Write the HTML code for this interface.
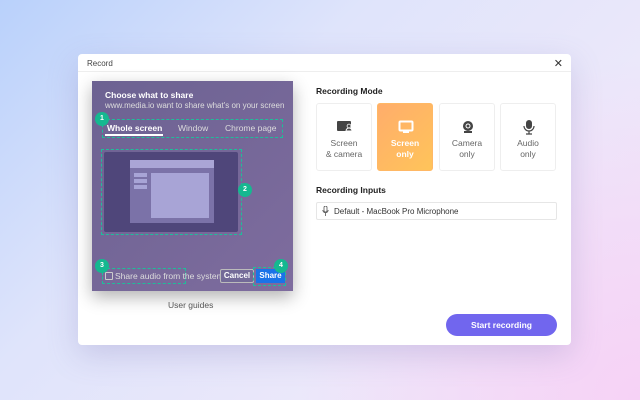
<!DOCTYPE html>
<html><head><style>
*{box-sizing:border-box;margin:0;padding:0}
body{width:640px;height:400px;overflow:hidden;font-family:"Liberation Sans",sans-serif;position:relative;
background:radial-gradient(circle at 100% 100%,#f6d2f6 0,rgba(246,210,246,0) 45%),linear-gradient(135deg,#b9d1fb 0%,#dfe4fb 35%,#ece8fa 70%,#f2e4f8 100%)}
.dlg{position:absolute;left:78px;top:54px;width:493px;height:291px;background:#fff;border-radius:4px;box-shadow:0 10px 30px rgba(120,110,180,.25)}
.hd{height:18px;border-bottom:1px solid #eee;font-size:8px;color:#444;padding:5px 9px}
.x{position:absolute;right:8px;top:3px;font-size:11px;color:#333}
.pp{position:absolute;left:14px;top:27px;width:201px;height:210px;background:linear-gradient(135deg,#6c6292,#7e6c9e);box-shadow:0 6px 16px rgba(0,0,0,.3);color:#fff}
.dash{position:absolute;border:1px dashed #1dbf9a}
.num{position:absolute;width:14px;height:14px;border-radius:50%;background:#15b890;color:#fff;font-size:7px;font-weight:bold;text-align:center;line-height:14px}
.t{position:absolute;font-size:8.5px;white-space:nowrap}
.sec{position:absolute;font-size:8.5px;font-weight:bold;color:#222}
.card{position:absolute;top:49px;width:56px;height:68px;border:1px solid #eee;border-radius:3px;text-align:center;font-size:8.5px;color:#666;line-height:11px;padding-top:34px}
.ic{position:absolute;left:20px;top:16px}
</style></head><body>
<div class="dlg">
<div class="hd">Record</div><div class="x">✕</div>
<div class="pp">
<div class="t" style="left:13px;top:9px;font-weight:bold;font-size:8.5px">Choose what to share</div>
<div class="t" style="left:13px;top:20px;color:#ddd;font-size:8px">www.media.io want to share what's on your screen</div>
<div class="dash" style="left:10px;top:38px;height:19px;width:181px"></div>
<div class="t" style="left:15px;top:42px;font-weight:bold">Whole screen</div>
<div style="position:absolute;left:13px;top:53px;width:58px;height:1.5px;background:#fff"></div>
<div class="t" style="left:86px;top:42px;color:#ddd">Window</div>
<div class="t" style="left:133px;top:42px;color:#ddd">Chrome page</div>
<div class="num" style="left:3px;top:31px">1</div>
<div class="dash" style="left:9px;top:68px;width:141px;height:86px"></div>
<div style="position:absolute;left:12px;top:71px;width:134px;height:80px;background:#4f467a;border-radius:2px"></div>
<div style="position:absolute;left:38px;top:79px;width:84px;height:63px;background:#7b72a8"></div>
<div style="position:absolute;left:38px;top:79px;width:84px;height:8px;background:#aaa5d6"></div>
<div style="position:absolute;left:59px;top:92px;width:58px;height:45px;background:#a8a4d6"></div>
<div style="position:absolute;left:42px;top:92px;width:13px;height:4px;background:#a8a4d6"></div>
<div style="position:absolute;left:42px;top:98px;width:13px;height:4px;background:#a8a4d6"></div>
<div style="position:absolute;left:42px;top:104px;width:13px;height:4px;background:#a8a4d6"></div>
<div class="num" style="left:146px;top:102px">2</div>
<div class="dash" style="left:10px;top:187px;width:84px;height:16px"></div>
<div style="position:absolute;left:13px;top:191px;width:8px;height:8px;border:1px solid #ccc;border-radius:1px"></div>
<div class="t" style="left:23px;top:190px;color:#ddd">Share audio from the system</div>
<div class="num" style="left:3px;top:178px">3</div>
<div style="position:absolute;left:128px;top:188px;width:34px;height:14px;border:1px solid #bbb;border-radius:2px;font-size:8px;font-weight:bold;text-align:center;line-height:12px;background:#736a98">Cancel</div>
<div class="dash" style="left:161px;top:186px;width:33px;height:19px"></div>
<div style="position:absolute;left:164px;top:188px;width:29px;height:14px;background:#1a73e8;font-size:8px;font-weight:bold;text-align:center;line-height:14px">Share</div>
<div class="num" style="left:182px;top:178px">4</div>
</div>
<div class="t" style="left:90px;top:246px;color:#555;font-size:8.5px">User guides</div>
<div class="sec" style="left:238px;top:32px">Recording Mode</div>
<div class="card" style="left:238px"><svg class="ic" width="16" height="12"><rect x="0" y="1" width="14" height="10" rx="1" fill="#444"/><circle cx="12" cy="6" r="2.3" fill="#fff"/><circle cx="12" cy="6" r="1.5" fill="#444"/><path d="M9 11a3 3 0 0 1 6 0z" fill="#444" stroke="#fff"/></svg>Screen<br>&amp; camera</div>
<div class="card" style="left:299px;background:linear-gradient(135deg,#ffad6b,#ffc45a);border-color:#ffb865;color:#fff;font-weight:bold"><svg class="ic" width="16" height="14"><rect x="1.5" y="1.5" width="13" height="9" rx="1" fill="none" stroke="#fff" stroke-width="2"/><rect x="5" y="11" width="6" height="2" fill="#fff"/></svg>Screen<br>only</div>
<div class="card" style="left:361px"><svg class="ic" width="16" height="14"><circle cx="8" cy="6" r="5" fill="#444"/><circle cx="8" cy="6" r="2.5" fill="#fff"/><circle cx="8" cy="6" r="1.5" fill="#444"/><rect x="4" y="11" width="8" height="2" fill="#444"/></svg>Camera<br>only</div>
<div class="card" style="left:422px"><svg class="ic" width="16" height="15"><rect x="5" y="0" width="6" height="9" rx="3" fill="#444"/><path d="M3 6a5 5 0 0 0 10 0M8 11v3M5 14h6" fill="none" stroke="#444" stroke-width="1.2"/></svg>Audio<br>only</div>
<div class="sec" style="left:238px;top:131px">Recording Inputs</div>
<div style="position:absolute;left:238px;top:148px;width:241px;height:18px;border:1px solid #e6e6e6;border-radius:2px;font-size:8px;color:#333;padding:4px 0 0 17px">
<svg style="position:absolute;left:5px;top:3px" width="7" height="11"><rect x="2" y="0" width="3" height="6" rx="1.5" fill="none" stroke="#555" stroke-width=".8"/><path d="M.8 4a2.7 2.7 0 0 0 5.4 0M3.5 7v3" fill="none" stroke="#555" stroke-width=".8"/></svg>Default - MacBook Pro Microphone</div>
<div style="position:absolute;left:368px;top:260px;width:111px;height:22px;border-radius:11px;background:#7166ee;color:#fff;font-size:8.5px;font-weight:bold;text-align:center;line-height:22px">Start recording</div>
</div>
</body></html>
